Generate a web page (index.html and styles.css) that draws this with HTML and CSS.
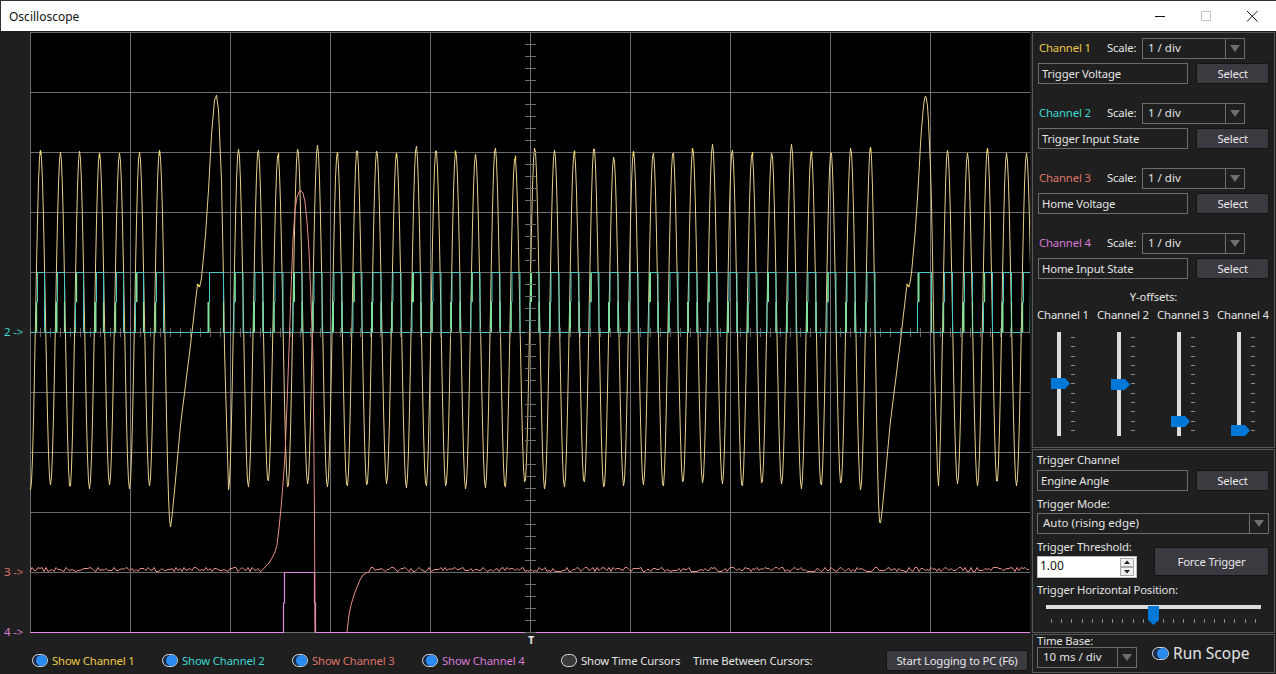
FILE: index.html
```html
<!DOCTYPE html>
<html lang="en">
<head>
<meta charset="utf-8">
<title>Oscilloscope</title>
<link rel="stylesheet" href="styles.css">
</head>
<body>
<div class="window">
  <header class="titlebar">
    <span class="title">Oscilloscope</span>
    <div class="winctl">
      <svg class="wicon" viewBox="0 0 46 31"><path d="M18 15.5h10" stroke="#111" fill="none"/></svg>
      <svg class="wicon" viewBox="0 0 46 31"><path d="M18.5 10.5h9v9h-9z" stroke="#c4c4c4" fill="none"/></svg>
      <svg class="wicon" viewBox="0 0 46 31"><path d="M18 10l10.500 10.500M28.500 10L18 20.500" stroke="#111" fill="none"/></svg>
    </div>
  </header>
  <div class="main">
    <div class="scope-col">
      <svg id="scope" class="scope" viewBox="0 31 1030 617" width="1030" height="617">
        <rect x="30" y="32" width="1000" height="601" fill="#000"/>
        <g id="grid"></g>
        <g id="traces"></g>
        <text x="4" y="336" class="axis c2">2 -&gt;</text>
        <text x="4" y="576" class="axis c3">3 -&gt;</text>
        <text x="4" y="636" class="axis c4">4 -&gt;</text>
        <text x="531" y="644" class="tmark" text-anchor="middle">T</text>
      </svg>
      <div class="legend">
        <label class="show w130"><span class="radio on"></span><span class="c1">Show Channel 1</span></label>
        <label class="show w130"><span class="radio on"></span><span class="c2">Show Channel 2</span></label>
        <label class="show w130"><span class="radio on"></span><span class="c3">Show Channel 3</span></label>
        <label class="show w139"><span class="radio on"></span><span class="c4">Show Channel 4</span></label>
        <label class="show w132"><span class="radio"></span><span>Show Time Cursors</span></label>
        <span class="between">Time Between Cursors:</span>
        <button class="btn log">Start Logging to PC (F6)</button>
      </div>
    </div>
    <aside class="side">
      <section class="panel p1">
        <div class="channels">
          <div class="channel">
            <div class="chead"><span class="chname c1">Channel 1</span><span class="scale">Scale:</span>
              <div class="combo cscale"><span class="cval">1 / div</span><span class="arrow"></span></div></div>
            <div class="row"><div class="field">Trigger Voltage</div><button class="btn sel">Select</button></div>
          </div>
          <div class="channel">
            <div class="chead"><span class="chname c2">Channel 2</span><span class="scale">Scale:</span>
              <div class="combo cscale"><span class="cval">1 / div</span><span class="arrow"></span></div></div>
            <div class="row"><div class="field">Trigger Input State</div><button class="btn sel">Select</button></div>
          </div>
          <div class="channel">
            <div class="chead"><span class="chname c3">Channel 3</span><span class="scale">Scale:</span>
              <div class="combo cscale"><span class="cval">1 / div</span><span class="arrow"></span></div></div>
            <div class="row"><div class="field">Home Voltage</div><button class="btn sel">Select</button></div>
          </div>
          <div class="channel">
            <div class="chead"><span class="chname c4">Channel 4</span><span class="scale">Scale:</span>
              <div class="combo cscale"><span class="cval">1 / div</span><span class="arrow"></span></div></div>
            <div class="row"><div class="field">Home Input State</div><button class="btn sel">Select</button></div>
          </div>
        </div>
        <div class="yhead">Y-offsets:</div>
        <div class="ygrid">
          <div class="ycol"><div class="ylabel">Channel 1</div><div class="vslider"><div class="vtrack"></div><div class="vticks"><i></i><i></i><i></i><i></i><i></i><i></i><i></i><i></i><i></i><i></i><i></i></div><div class="vthumb" style="top:46px"></div></div></div>
          <div class="ycol"><div class="ylabel">Channel 2</div><div class="vslider"><div class="vtrack"></div><div class="vticks"><i></i><i></i><i></i><i></i><i></i><i></i><i></i><i></i><i></i><i></i><i></i></div><div class="vthumb" style="top:47px"></div></div></div>
          <div class="ycol"><div class="ylabel">Channel 3</div><div class="vslider"><div class="vtrack"></div><div class="vticks"><i></i><i></i><i></i><i></i><i></i><i></i><i></i><i></i><i></i><i></i><i></i></div><div class="vthumb" style="top:84px"></div></div></div>
          <div class="ycol"><div class="ylabel">Channel 4</div><div class="vslider"><div class="vtrack"></div><div class="vticks"><i></i><i></i><i></i><i></i><i></i><i></i><i></i><i></i><i></i><i></i><i></i></div><div class="vthumb" style="top:93px"></div></div></div>
        </div>
      </section>
      <section class="panel p2">
        <div class="lbl">Trigger Channel</div>
        <div class="row r2"><div class="field">Engine Angle</div><button class="btn sel">Select</button></div>
        <div class="lbl mt5">Trigger Mode:</div>
        <div class="combo cmode"><span class="cval">Auto (rising edge)</span><span class="arrow"></span></div>
        <div class="thresh">
          <div class="tcol">
            <div class="lbl">Trigger Threshold:</div>
            <div class="spin"><span class="spinval">1.00</span><span class="spinbtns"><svg viewBox="0 0 14 18" width="14" height="18"><rect x=".5" y=".5" width="13" height="8" fill="#f0f0f0" stroke="#aaa"/><rect x=".5" y="9.500" width="13" height="8" fill="#f0f0f0" stroke="#aaa"/><path d="M7 2.500l3 3.500H4zM7 15.500l-3-3.500h6z" fill="#222"/></svg></span></div>
          </div>
          <button class="btn force">Force Trigger</button>
        </div>
        <div class="lbl hpos">Trigger Horizontal Position:</div>
        <div class="hslider"><div class="htrack"></div><div class="hthumb"></div>
          <div class="hticks"><i></i><i></i><i></i><i></i><i></i><i></i><i></i><i></i><i></i><i></i><i></i><i></i><i></i><i></i><i></i><i></i><i></i><i></i><i></i><i></i><i></i></div>
        </div>
      </section>
      <section class="panel p3">
        <div class="tb">
          <div class="lbl lh">Time Base:</div>
          <div class="combo ctime"><span class="cval">10 ms / div</span><span class="arrow"></span></div>
        </div>
        <label class="run"><span class="radio on big"></span><span>Run Scope</span></label>
      </section>
    </aside>
  </div>
</div>
<script src="scope.js"></script>
</body>
</html>
```
FILE: styles.css
```css
* { box-sizing: border-box; }
html, body { margin: 0; height: 100%; overflow: hidden; background: #1f1f1f; }
body { font-family: "Noto Sans", "Open Sans", sans-serif; font-size: 11.3px; letter-spacing: -0.15px; color: #e4e4e4; }
.window { width: 1276px; height: 674px; display: flex; flex-direction: column; }
.titlebar { height: 31px; background: #fff; border-top: 1px solid #333; border-left: 1px solid #333; display: flex; align-items: center; justify-content: space-between; flex: none; }
.title { padding-left: 8px; color: #111; font-size: 12px; letter-spacing: 0; }
.winctl { display: flex; margin-right: 1px; }
.wicon { width: 46px; height: 31px; display: block; }
.main { display: flex; flex: 1; min-height: 0; }
.scope-col { width: 1030px; flex: none; display: flex; flex-direction: column; }
.scope { display: block; flex: none; }
.axis { font-size: 11.500px; font-family: "Noto Sans", sans-serif; }
.tmark { font-size: 10px; font-weight: 700; fill: #eee; font-family: "Noto Sans", sans-serif; }
.c1 { color: #ecc94a; fill: #ecc94a; }
.c2 { color: #3ed6cf; fill: #3ed6cf; }
.c3 { color: #de7468; fill: #de7468; }
.c4 { color: #d77ad6; fill: #d77ad6; }

.legend { height: 26px; display: flex; align-items: center; padding: 0 2px 2px 32px; }
.show { display: flex; align-items: center; gap: 4px; white-space: nowrap; }
.w130 { width: 130px; }
.w139 { width: 139px; }
.w132 { width: 132px; }
.between { flex: 1; white-space: nowrap; }
.radio { width: 16px; height: 13px; border-radius: 7px; border: 1px solid #ddd; background: #3a3a3a; position: relative; flex: none; display: block; }
.radio.on { background: #1b2b45; }
.radio.on::after { content: ""; position: absolute; right: 0; top: 0; width: 11px; height: 11px; border-radius: 50%; background: #2a8cf0; }
.radio.big { width: 17px; height: 13px; }

.btn { font: inherit; letter-spacing: inherit; color: #e8e8e8; background: #3a3a40; border: 1px solid #141414; border-radius: 2px; padding: 0; }
.log { width: 142px; height: 21px; }
.side { width: 246px; flex: none; padding: 1px 0 0 2px; display: flex; flex-direction: column; gap: 1px; }
.panel { border: 1px solid #565656; width: 243px; }
.p1 { height: 416px; }
.p2 { height: 184px; padding: 2px 5px 0 4px; }
.p3 { height: 39px; padding: 0 0 0 4px; display: flex; }

.channels { padding: 5px 5px 0; display: flex; flex-direction: column; gap: 19px; }
.channel { display: flex; flex-direction: column; gap: 4px; }
.chead { display: flex; align-items: center; height: 21px; }
.chname { width: 69px; padding-left: 1px; padding-bottom: 2px; white-space: nowrap; }
.scale { width: 35px; padding-bottom: 2px; white-space: nowrap; }
.row { display: flex; gap: 8px; height: 21px; }
.field { width: 151px; border: 1px solid #6c6c6c; padding-left: 3px; line-height: 19px; white-space: nowrap; }
.sel { width: 73px; height: 21px; }
.combo { display: flex; height: 21px; border: 1px solid #6c6c6c; }
.cval { flex: 1; padding-left: 5px; line-height: 17px; white-space: nowrap; letter-spacing: 0; font-size: 11.5px; }
.arrow { width: 19px; border-left: 1px solid #6c6c6c; flex: none; position: relative; }
.arrow::after { content: ""; position: absolute; left: 4px; top: 6px; border: 5px solid transparent; border-top: 7px solid #6e6e6e; border-bottom: 0; }
.cscale { width: 103px; }
.cmode { width: 232px; margin-top: 1px; }
.ctime { width: 100px; }

.yhead { text-align: center; line-height: 16px; margin-top: 10px; }
.ygrid { display: grid; grid-template-columns: repeat(4, 60px); margin-top: 2px; }
.ycol { display: flex; flex-direction: column; align-items: center; }
.ylabel { line-height: 16px; white-space: nowrap; }
.vslider { width: 60px; height: 104px; margin-top: 9px; position: relative; display: flex; }
.vtrack { width: 4px; height: 104px; margin-left: 24px; background: #dcdcdc; }
.vticks { margin: 5px 0 0 10px; width: 4px; height: 94px; display: flex; flex-direction: column; justify-content: space-between; }
.vticks i { display: block; height: 1px; background: #8a8a8a; }
.vthumb { position: absolute; left: 18px; width: 19px; height: 11px; background: #0078d7; clip-path: polygon(0 0, 14px 0, 100% 50%, 14px 100%, 0 100%); }

.lbl { line-height: 16px; white-space: nowrap; }
.mt5 { margin-top: 5px; }
.r2 { margin-top: 2px; }
.thresh { display: flex; gap: 17px; margin-top: 5px; }
.tcol { width: 100px; }
.spin { height: 22px; margin-top: 1px; background: #fff; color: #111; border: 1px solid #bbb; display: flex; align-items: center; justify-content: space-between; padding: 0 1px 0 2px; font-size: 12px; letter-spacing: 0; }
.spinval { padding-bottom: 3px; }
.spinbtns { display: block; line-height: 0; margin-right: 1px; }
.force { width: 115px; height: 29px; margin-top: 8px; }
.hpos { margin-top: 4px; }
.hslider { position: relative; height: 26px; margin-left: 9px; width: 215px; }
.htrack { height: 4px; background: #dcdcdc; margin-top: 7px; position: relative; top: 0; }
.hthumb { position: absolute; left: 102px; top: 1px; width: 11px; height: 19px; background: #0078d7; clip-path: polygon(0 0, 100% 0, 100% 14px, 50% 100%, 0 14px); }
.hticks { display: flex; justify-content: space-between; margin: 10px 5px 0; height: 4px; }
.hticks i { display: block; width: 1px; background: #8a8a8a; }

.tb { width: 100px; }
.lh { line-height: 12px; }
.run { display: flex; align-items: center; gap: 4px; margin: 6px 0 0 15px; height: 24px; font-size: 15.500px; letter-spacing: 0; white-space: nowrap; }
```
FILE: scope.js
```js
(function () {
  var NS = 'http://www.w3.org/2000/svg';
  var grid = document.getElementById('grid');
  var traces = document.getElementById('traces');
  var seed = 20231;
  function rnd() { seed = (seed * 16807) % 2147483647; return seed / 2147483647; }

  function add(parent, pts, color, width) {
    var p = document.createElementNS(NS, 'polyline');
    p.setAttribute('points', pts.map(function (q) { return q[0] + ',' + q[1]; }).join(' '));
    p.setAttribute('fill', 'none');
    p.setAttribute('stroke', color);
    p.setAttribute('stroke-width', width || 1);
    parent.appendChild(p);
  }

  /* grid */
  var GRID = '#6c6c6c', i;
  for (i = 0; i <= 10; i++) add(grid, [[30.5 + i * 100, 32], [30.5 + i * 100, 633]], GRID);
  for (i = 0; i <= 10; i++) add(grid, [[30, 32.5 + i * 60], [1030, 32.5 + i * 60]], GRID);

  /* channel 1: extrema of the wave, joined by cosine arcs */
  var anchors = [];
  var tops = [];
  function arc(a, b) {
    var n = Math.max(1, Math.round(b[0] - a[0]));
    for (var j = 0; j < n; j++) {
      var t = j / n, c = (1 - Math.cos(Math.PI * t)) / 2;
      anchors.push([a[0] + (b[0] - a[0]) * t, a[1] + (b[1] - a[1]) * c]);
    }
  }
  function wave(start, list, lo, hi) {
    var prev = start;
    list.forEach(function (x, n) {
      var top = [x, lo + rnd() * (hi - lo)];
      arc(prev, top);
      tops.push(top);
      prev = top;
      if (n < list.length - 1) {
        var low = [(x + list[n + 1]) / 2, 484 + rnd() * 7];
        arc(prev, low);
        prev = low;
      }
    });
    return prev;
  }
  var peaks = [40, 60, 79, 99, 119, 139, 159];
  var mid = [];
  for (i = 0; i <= 32; i++) mid.push(238 + i * 19.75);
  var right = [947, 967, 987, 1006, 1026];
  var bump = [[170, 527], [172, 512], [175, 480], [180, 425], [185, 385], [190, 345], [194, 310], [197, 284], [199, 287],
              [201, 278], [205, 235], [208, 190], [211, 135], [214, 100], [216, 95], [218, 110], [221, 180],
              [223, 280], [224, 350], [226, 420], [228, 490]];

  var end = wave([30, 490], peaks, 149, 154);
  arc(end, bump[0]);
  bump.forEach(function (q) { anchors.push(q); });
  end = wave(bump[bump.length - 1], mid, 144, 155);
  var shifted = bump.map(function (q) { return [q[0] + 709.5, q[1]]; });
  arc(end, shifted[0]);
  shifted.forEach(function (q) { anchors.push(q); });
  end = wave(shifted[shifted.length - 1], right, 148, 157);
  arc(end, [1036, 490]);

  function yAt(x) {
    for (var k = 0; k < anchors.length - 1; k++) {
      var a = anchors[k], b = anchors[k + 1];
      if (x >= a[0] && x <= b[0]) {
        return Math.round(a[1] + (b[1] - a[1]) * (x - a[0]) / Math.max(b[0] - a[0], 0.001));
      }
    }
    return 490;
  }
  var yellow = [];
  for (var col = 30; col <= 1030; col++) yellow.push([col + 0.5, yAt(col)]);
  add(traces, yellow, '#e6cf8e', 1);
  tops.forEach(function (q, n) {
    if (n % 3 === 0) add(traces, [[Math.round(q[0]) + 0.5, q[1] + 1], [Math.round(q[0]) + 0.5, q[1] + 5]], '#f2d95a', 1.4);
  });
  add(traces, [[197, 284], [200, 287]], '#f2d95a', 1.4);
  add(traces, [[906.5, 284], [909.5, 287]], '#f2d95a', 1.4);

  /* channel 2 */
  var pulses = [];
  peaks.forEach(function (p) { pulses.push([p - 3, p + 4]); });
  pulses.push([209, 223]);
  mid.forEach(function (p) { pulses.push([Math.round(p) - 3.5, Math.round(p) + 4.5]); });
  pulses.push([918, 931]);
  right.forEach(function (p) { pulses.push([p - 3, Math.min(p + 5, 1030)]); });

  var cyan = [[30, 332.5]];
  pulses.forEach(function (r) {
    cyan.push([r[0] - 0.5, 332.5], [r[0] - 0.5, 302], [r[0] + 0.5, 302], [r[0] + 0.5, 272.5]);
    cyan.push([r[1] + 0.5, 272.5]);
    if (r[1] < 1030) cyan.push([r[1] + 0.5, 332.5]);
  });
  cyan.push([1030, 332.5]);
  add(traces, cyan, '#49c9c6');
  pulses.forEach(function (r, n) {
    var low = n % 3 !== 2;
    var x = r[0] - 0.5;
    add(traces, low ? [[x, 302], [x, 332]] : [[x + 1, 273], [x + 1, 302]], '#7fe29c', n % 2 ? 2 : 1.4);
    if (n % 2 && r[1] < 1030) add(traces, [[r[1] + 0.5, 302], [r[1] + 0.5, 332]], '#86dfa8', 1.2);
  });

  /* channel 4 */
  add(traces, [[30, 632.5], [283.5, 632.5], [283.5, 603], [284.5, 603], [284.5, 572.5], [314.5, 572.5], [314.5, 603], [315.5, 603], [315.5, 632.5], [1030, 632.5]], '#e08ee0', 1.2);

  /* channel 3 */
  var pink = [];
  var x;
  for (x = 30; x < 264; x += 2) pink.push([x, 569 + Math.round((rnd() - 0.5) * 5) + 0.5]);
  [[266, 566], [269, 563], [272, 558], [275, 552], [277, 545], [279, 528], [281, 508], [283, 484], [285, 455],
   [287, 405], [289, 350], [291, 290], [293, 240], [295, 210], [297, 197], [300, 190], [303, 193], [305, 202],
   [307, 222], [309, 250], [311, 300], [313, 360], [314, 460], [314.5, 520], [315, 632]].forEach(function (q) { pink.push(q); });
  add(traces, pink, '#e88f86');
  pink = [[347, 632], [349, 615], [351, 605], [354, 595], [357, 587], [360, 580], [363, 575], [366, 573], [369, 572]];
  for (x = 371; x <= 1030; x += 2) pink.push([x, 569 + Math.round((rnd() - 0.5) * 5) + 0.5]);
  add(traces, pink, '#e88f86');

  /* axis ticks on the centre lines, over the traces */
  for (x = 30; x <= 1030; x += 10) add(traces, [[x + 0.5, 328], [x + 0.5, 337]], 'rgba(130,130,130,.75)');
  for (i = 0; i <= 50; i++) add(traces, [[525, 32.5 + i * 12], [536, 32.5 + i * 12]], '#6c6c6c');
})();
```
